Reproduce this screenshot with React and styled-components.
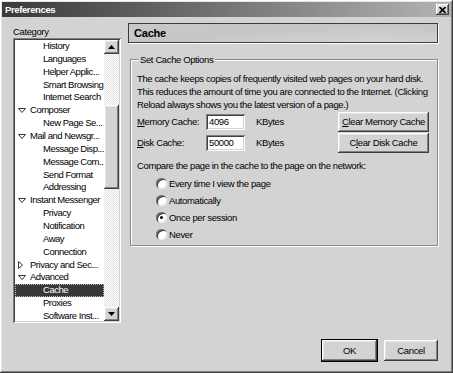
import React from 'react';
import styled, { createGlobalStyle, css } from 'styled-components';

const GlobalStyle = createGlobalStyle`
  html, body {
    margin: 0;
    padding: 0;
    background: #d3d3d3;
  }
  * {
    box-sizing: border-box;
  }
`;

const raised = css`
  box-shadow: inset -1px -1px #404040, inset 1px 1px #ffffff,
    inset -2px -2px #808080, inset 2px 2px #e4e4e4;
`;

const sunken = css`
  box-shadow: inset 1px 1px #808080, inset -1px -1px #ffffff,
    inset 2px 2px #404040, inset -2px -2px #d3d3d3;
`;

const Window = styled.div`
  width: 453px;
  height: 373px;
  padding: 2px;
  background: #d3d3d3;
  display: flex;
  flex-direction: column;
  font-family: "Liberation Sans", Arial, sans-serif;
  font-size: 9.5px;
  letter-spacing: -0.38px;
  color: #000;
  white-space: nowrap;
  overflow: hidden;
  ${raised};
`;

const TitleBar = styled.div`
  height: 15px;
  display: flex;
  align-items: center;
  justify-content: space-between;
  padding: 0 2px 0 3px;
  background: linear-gradient(to right, #3a3a3a 0%, #6e6e6e 45%, #b4b4b4 100%);
`;

const TitleText = styled.span`
  color: #fff;
  font-weight: bold;
  line-height: 15px;
`;

const CloseButton = styled.div`
  width: 13px;
  height: 11px;
  display: flex;
  align-items: center;
  justify-content: center;
  background: #d3d3d3;
  ${raised};
`;

const Content = styled.div`
  display: flex;
  padding: 6px 13px 0 11px;
`;

const Sidebar = styled.div`
  width: 108px;
  margin-top: 2px;
  display: flex;
  flex-direction: column;
`;

const Label = styled.div`
  line-height: 13px;
  height: 13px;
`;

const ListBox = styled.div`
  height: 285px;
  padding: 2px;
  background: #fff;
  display: flex;
  ${sunken};
`;

const ListRows = styled.div`
  flex: 1;
  overflow: hidden;
  letter-spacing: -0.48px;
`;

const Row = styled.div`
  height: 12.86px;
  line-height: 12.86px;
  display: flex;
  align-items: center;
  padding-left: ${(p) => (p.$child ? 28 : 3)}px;
  background: ${(p) => (p.$selected ? '#383838' : 'transparent')};
  color: ${(p) => (p.$selected ? '#fff' : '#000')};
  outline: ${(p) => (p.$selected ? '1px dotted #bbb' : 'none')};
  outline-offset: -1px;
`;

const Twisty = styled.span`
  width: 12px;
  display: inline-flex;
  align-items: center;
`;

const ScrollBar = styled.div`
  width: 15px;
  display: flex;
  flex-direction: column;
`;

const ScrollButton = styled.div`
  height: 14px;
  display: flex;
  align-items: center;
  justify-content: center;
  background: #d3d3d3;
  ${raised};
`;

const Track = styled.div`
  flex: 1;
  background: repeating-conic-gradient(#ffffff 0 25%, #e2e2e2 0 50%) 0 0 / 2px 2px;
  padding-top: 51px;
`;

const Thumb = styled.div`
  height: 84px;
  background: #d3d3d3;
  ${raised};
`;

const Main = styled.div`
  flex: 1;
  margin-left: 7px;
  display: flex;
  flex-direction: column;
`;

const Header = styled.div`
  height: 20px;
  border: 1px solid #3c3c3c;
  box-shadow: 1px 1px 0 #ffffff;
  background: radial-gradient(ellipse at 80% 120%, #d6d6d6 0%, #c6c6c6 60%, #c9c9c9 100%);
  font-weight: bold;
  font-size: 11px;
  letter-spacing: -0.2px;
  line-height: 18px;
  padding-left: 5px;
`;

const Group = styled.fieldset`
  margin: 10px 0 0 2px;
  padding: 6px 8px 2px 6px;
  border: 1px solid #8a8a8a;
  box-shadow: inset 1px 1px #ffffff, 1px 1px #ffffff;
  min-inline-size: 0;
`;

const Legend = styled.legend`
  padding: 0 2px;
  margin-left: 1px;
  line-height: 13px;
  background: #d3d3d3;
`;

const Text = styled.div`
  line-height: 13px;
  margin-top: ${(p) => p.$top || 0}px;
`;

const CacheRow = styled.div`
  height: 21px;
  display: flex;
  align-items: center;
`;

const FieldLabel = styled.span`
  width: 69px;
`;

const Field = styled.div`
  width: 39px;
  height: 16px;
  background: #fff;
  padding: 2px 0 0 3px;
  line-height: 12px;
  ${sunken};
`;

const Unit = styled.span`
  margin-left: 11px;
`;

const Button = styled.div`
  margin-left: ${(p) => (p.$push ? 'auto' : '0')};
  width: ${(p) => p.$w}px;
  height: ${(p) => p.$h || 20}px;
  display: flex;
  align-items: center;
  justify-content: center;
  background: #d3d3d3;
  ${raised};
  ${(p) =>
    p.$default &&
    css`
      outline: 1px solid #000;
    `}
`;

const RadioList = styled.div`
  margin-top: 3px;
  padding-left: 19px;
`;

const RadioRow = styled.div`
  height: 17px;
  display: flex;
  align-items: center;
`;

const RadioDot = styled.span`
  width: 11px;
  height: 11px;
  border-radius: 50%;
  margin-right: 2px;
  background: #fff;
  box-shadow: inset 1px 1px #808080, inset 2px 2px #404040, inset -1px -1px #e8e8e8;
  display: flex;
  align-items: center;
  justify-content: center;
  &::after {
    content: '';
    width: 3px;
    height: 3px;
    border-radius: 50%;
    background: ${(p) => (p.$on ? '#000' : 'transparent')};
  }
`;

const Footer = styled.div`
  margin-top: auto;
  display: flex;
  justify-content: flex-end;
  gap: 7px;
  padding: 0 13px 10px 0;
`;

const Key = styled.span`
  text-decoration: underline;
`;

const items = [
  { label: 'History', child: true },
  { label: 'Languages', child: true },
  { label: 'Helper Applic...', child: true },
  { label: 'Smart Browsing', child: true },
  { label: 'Internet Search', child: true },
  { label: 'Composer', arrow: 'down' },
  { label: 'New Page Se...', child: true },
  { label: 'Mail and Newsgr...', arrow: 'down' },
  { label: 'Message Disp...', child: true },
  { label: 'Message Com...', child: true },
  { label: 'Send Format', child: true },
  { label: 'Addressing', child: true },
  { label: 'Instant Messenger', arrow: 'down' },
  { label: 'Privacy', child: true },
  { label: 'Notification', child: true },
  { label: 'Away', child: true },
  { label: 'Connection', child: true },
  { label: 'Privacy and Sec...', arrow: 'right' },
  { label: 'Advanced', arrow: 'down' },
  { label: 'Cache', child: true, selected: true },
  { label: 'Proxies', child: true },
  { label: 'Software Inst...', child: true },
];

const Arrow = ({ dir }) =>
  dir === 'down' ? (
    <svg width="8" height="5" viewBox="0 0 8 5">
      <path d="M0.5 0.5 H7.5 L4 4.5 Z" fill="#fff" stroke="#333" strokeWidth="1" />
    </svg>
  ) : (
    <svg width="5" height="8" viewBox="0 0 5 8">
      <path d="M0.5 0.5 V7.5 L4.5 4 Z" fill="#fff" stroke="#333" strokeWidth="1" />
    </svg>
  );

const ScrollArrow = ({ up }) => (
  <svg width="7" height="4" viewBox="0 0 7 4">
    <path d={up ? 'M3.5 0 L7 4 H0 Z' : 'M0 0 H7 L3.5 4 Z'} fill="#000" />
  </svg>
);

const options = ['Every time I view the page', 'Automatically', 'Once per session', 'Never'];

export default function App() {
  return (
    <>
      <GlobalStyle />
      <Window>
        <TitleBar>
          <TitleText>Preferences</TitleText>
          <CloseButton>
            <svg width="7" height="6" viewBox="0 0 7 6">
              <path d="M0.5 0 L6.5 6 M6.5 0 L0.5 6" stroke="#000" strokeWidth="1.6" />
            </svg>
          </CloseButton>
        </TitleBar>

        <Content>
          <Sidebar>
            <Label>Category</Label>
            <ListBox>
              <ListRows>
                {items.map((it) => (
                  <Row key={it.label} $child={it.child} $selected={it.selected}>
                    {it.arrow && (
                      <Twisty>
                        <Arrow dir={it.arrow} />
                      </Twisty>
                    )}
                    {it.label}
                  </Row>
                ))}
              </ListRows>
              <ScrollBar>
                <ScrollButton>
                  <ScrollArrow up />
                </ScrollButton>
                <Track>
                  <Thumb />
                </Track>
                <ScrollButton>
                  <ScrollArrow />
                </ScrollButton>
              </ScrollBar>
            </ListBox>
          </Sidebar>

          <Main>
            <Header>Cache</Header>
            <Group>
              <Legend>Set Cache Options</Legend>
              <Text>The cache keeps copies of frequently visited web pages on your hard disk.</Text>
              <Text>This reduces the amount of time you are connected to the Internet. (Clicking</Text>
              <Text>Reload always shows you the latest version of a page.)</Text>
              <CacheRow>
                <FieldLabel>
                  <Key>M</Key>emory Cache:
                </FieldLabel>
                <Field>4096</Field>
                <Unit>KBytes</Unit>
                <Button $push $w={91}>
                  <span>
                    <Key>C</Key>lear Memory Cache
                  </span>
                </Button>
              </CacheRow>
              <CacheRow>
                <FieldLabel>
                  <Key>D</Key>isk Cache:
                </FieldLabel>
                <Field>50000</Field>
                <Unit>KBytes</Unit>
                <Button $push $w={91}>
                  <span>
                    C<Key>l</Key>ear Disk Cache
                  </span>
                </Button>
              </CacheRow>
              <Text $top={6}>Compare the page in the cache to the page on the network:</Text>
              <RadioList>
                {options.map((o) => (
                  <RadioRow key={o}>
                    <RadioDot $on={o === 'Once per session'} />
                    {o}
                  </RadioRow>
                ))}
              </RadioList>
            </Group>
          </Main>
        </Content>

        <Footer>
          <Button $w={55} $h={21} $default>
            OK
          </Button>
          <Button $w={54} $h={21}>
            Cancel
          </Button>
        </Footer>
      </Window>
    </>
  );
}
